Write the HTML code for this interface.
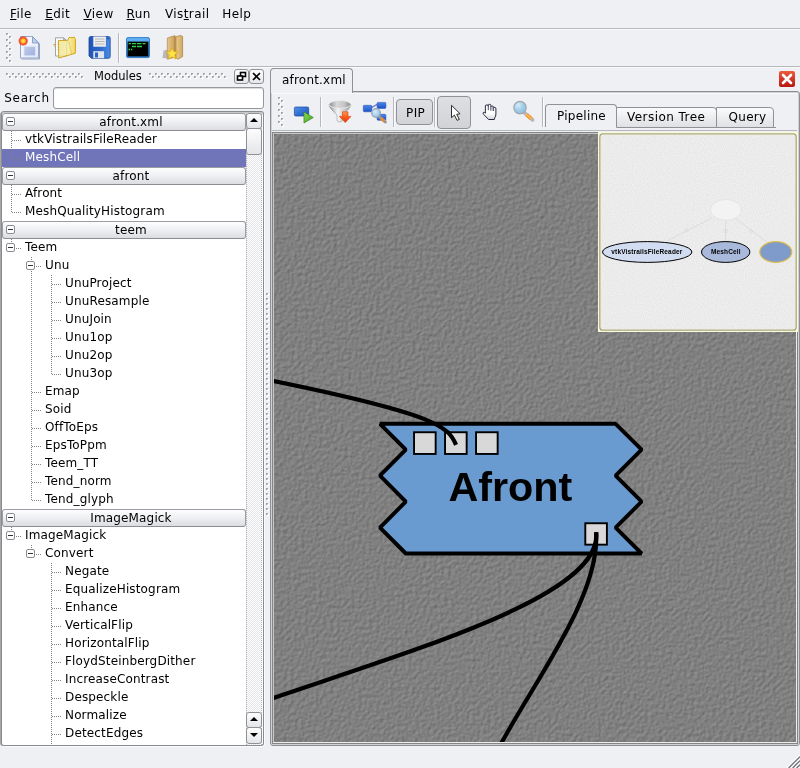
<!DOCTYPE html>
<html>
<head>
<meta charset="utf-8">
<title>VisTrails Builder</title>
<style>
html,body{margin:0;padding:0;}
body{width:800px;height:768px;overflow:hidden;background:#eff0f4;position:relative;
  font-family:"DejaVu Sans","Liberation Sans",sans-serif;font-size:12px;letter-spacing:0.15px;color:#000;}
.abs{position:absolute;}
.t{position:absolute;white-space:nowrap;line-height:16px;height:16px;}
u{text-decoration:underline;text-underline-offset:1px;text-decoration-thickness:1px;}
.ln{left:0;width:800px;height:1px;background:#b6b8be;}
.ln2{left:0;width:800px;height:1px;background:#f9fafc;}
.vsep{position:absolute;width:1px;background:#b6b8be;box-shadow:1px 0 0 #fafbfd;}
.dockbtn{width:13px;height:13px;border:1px solid #8f9196;border-radius:3px;background:linear-gradient(#fdfdfd,#e6e7ea);}
.dockbtn svg{display:block;}
#search{left:53px;top:87px;width:209px;height:20px;border:1px solid #96989e;border-radius:3px;background:#fff;box-shadow:inset 0 1px 1px #d8d9dd;}
/* tree */
#tree{left:1px;top:112px;width:261px;height:632px;background:#fff;border:1px solid #8a8b90;border-top-color:#c6c7cb;border-radius:3px;overflow:hidden;box-shadow:0 -1px 0 0 #8a8b90,1px 1px 0 0 #fbfbfd,-1px 0 0 0 #a6a7ab;}
.row{position:absolute;left:0;width:244px;height:18px;}
.row .t{top:0px;}
.hdr{position:absolute;left:0px;width:244px;height:18px;border:1px solid #9c9da2;border-bottom-color:#8c8d92;border-radius:3px;box-sizing:border-box;
  background:linear-gradient(#fdfdfe,#f0f1f4 45%,#dcdde1);text-align:center;line-height:16px;padding-left:14px;}
.hdr .box{left:3px;top:3px;}
.box{position:absolute;width:9px;height:9px;box-sizing:border-box;border:1px solid #8a8c92;border-radius:2px;background:#fff;}
.box:after{content:"";position:absolute;left:1px;top:3px;width:5px;height:1px;background:#333;}
.sel{background:#7074b8;color:#fff;}
.vl{position:absolute;width:1px;background-image:linear-gradient(to bottom,#828282 1px,transparent 1px);background-size:1px 2px;}
.hl{position:absolute;height:1px;background-image:linear-gradient(to right,#828282 1px,transparent 1px);background-size:2px 1px;}
#sbtrack{left:244px;top:0;width:16px;height:632px;background-color:#fff;
  background-image:linear-gradient(45deg,#e4e5e8 25%,transparent 25%,transparent 75%,#e4e5e8 75%),linear-gradient(45deg,#e4e5e8 25%,transparent 25%,transparent 75%,#e4e5e8 75%);
  background-size:2px 2px;background-position:0 0,1px 1px;}
.sbbtn{width:16px;height:16px;box-sizing:border-box;border:1px solid #8f9196;border-radius:3px;background:linear-gradient(#fdfdfd,#e4e5e9);}
.sbbtn i{position:absolute;left:3px;width:0;height:0;border-left:4px solid transparent;border-right:4px solid transparent;}
.sbbtn i.up{top:4px;border-bottom:4px solid #000;}
.sbbtn i.dn{top:5px;border-top:4px solid #000;}
/* right side */
#pane{left:270px;top:91px;width:528px;height:653px;border:1px solid #8c8e93;border-radius:3px;box-shadow:inset 0 0 0 1px #d0d1d5;}
#maintab{left:270px;top:68px;width:81px;height:24px;border:1px solid #8f9196;border-bottom:none;border-radius:4px 4px 0 0;background:#eff0f4;}
.tab{position:absolute;box-sizing:border-box;border:1px solid #8f9196;border-bottom:1px solid #8f9196;border-radius:0 4px 0 0;background:linear-gradient(#fbfbfc,#dfe0e4);text-align:center;}
.tab.act{background:#eff0f4;border-bottom:none;border-radius:4px 4px 0 0;}
.tbtn{position:absolute;box-sizing:border-box;border:1px solid #8f9196;border-radius:4px;background:linear-gradient(#dedfe2,#d2d3d7);}

#sbtrack{border-left:1px dotted #b4b5b9;border-right:1px dotted #b4b5b9;box-sizing:border-box;}
#app{position:absolute;left:0;top:0;width:800px;height:768px;opacity:0.999;}

</style>
</head>
<body>
<div id="app">
<!-- MENUBAR -->
<div class="t" style="left:10px;top:6px;letter-spacing:0.4px"><u>F</u>ile</div>
<div class="t" style="left:45.3px;top:6px;letter-spacing:0.4px"><u>E</u>dit</div>
<div class="t" style="left:83.5px;top:6px;letter-spacing:0.4px"><u>V</u>iew</div>
<div class="t" style="left:126.6px;top:6px;letter-spacing:0.4px"><u>R</u>un</div>
<div class="t" style="left:165px;top:6px;letter-spacing:0.4px">Vis<u>t</u>rail</div>
<div class="t" style="left:222.3px;top:6px;letter-spacing:0.4px">Help</div>
<div class="abs ln" style="top:28px"></div><div class="abs ln2" style="top:29px"></div>
<div class="abs ln" style="top:66px"></div><div class="abs ln2" style="top:67px"></div>

<svg class="abs" style="left:0;top:0" width="300" height="530" viewBox="0 0 300 530" shape-rendering="crispEdges"><path d="M6 73h2v1h-1v1h-1zM12 73h2v1h-1v1h-1zM18 73h2v1h-1v1h-1zM24 73h2v1h-1v1h-1zM30 73h2v1h-1v1h-1zM36 73h2v1h-1v1h-1zM42 73h2v1h-1v1h-1zM48 73h2v1h-1v1h-1zM54 73h2v1h-1v1h-1zM60 73h2v1h-1v1h-1zM66 73h2v1h-1v1h-1zM72 73h2v1h-1v1h-1zM78 73h2v1h-1v1h-1zM9 76h2v1h-1v1h-1zM15 76h2v1h-1v1h-1zM21 76h2v1h-1v1h-1zM27 76h2v1h-1v1h-1zM33 76h2v1h-1v1h-1zM39 76h2v1h-1v1h-1zM45 76h2v1h-1v1h-1zM51 76h2v1h-1v1h-1zM57 76h2v1h-1v1h-1zM63 76h2v1h-1v1h-1zM69 76h2v1h-1v1h-1zM75 76h2v1h-1v1h-1zM81 76h2v1h-1v1h-1zM149 73h2v1h-1v1h-1zM155 73h2v1h-1v1h-1zM161 73h2v1h-1v1h-1zM167 73h2v1h-1v1h-1zM173 73h2v1h-1v1h-1zM179 73h2v1h-1v1h-1zM185 73h2v1h-1v1h-1zM191 73h2v1h-1v1h-1zM197 73h2v1h-1v1h-1zM203 73h2v1h-1v1h-1zM209 73h2v1h-1v1h-1zM215 73h2v1h-1v1h-1zM221 73h2v1h-1v1h-1zM152 76h2v1h-1v1h-1zM158 76h2v1h-1v1h-1zM164 76h2v1h-1v1h-1zM170 76h2v1h-1v1h-1zM176 76h2v1h-1v1h-1zM182 76h2v1h-1v1h-1zM188 76h2v1h-1v1h-1zM194 76h2v1h-1v1h-1zM200 76h2v1h-1v1h-1zM206 76h2v1h-1v1h-1zM212 76h2v1h-1v1h-1zM218 76h2v1h-1v1h-1zM224 76h2v1h-1v1h-1zM6 33h2v1h-1v1h-1zM6 39h2v1h-1v1h-1zM6 45h2v1h-1v1h-1zM6 51h2v1h-1v1h-1zM6 57h2v1h-1v1h-1zM9 36h2v1h-1v1h-1zM9 42h2v1h-1v1h-1zM9 48h2v1h-1v1h-1zM9 54h2v1h-1v1h-1zM9 60h2v1h-1v1h-1zM278 97h2v1h-1v1h-1zM278 103h2v1h-1v1h-1zM278 109h2v1h-1v1h-1zM278 115h2v1h-1v1h-1zM278 121h2v1h-1v1h-1zM281 100h2v1h-1v1h-1zM281 106h2v1h-1v1h-1zM281 112h2v1h-1v1h-1zM281 118h2v1h-1v1h-1zM281 124h2v1h-1v1h-1zM266 293h2v1h-1v1h-1zM266 298h2v1h-1v1h-1zM266 303h2v1h-1v1h-1zM266 308h2v1h-1v1h-1zM266 313h2v1h-1v1h-1zM266 318h2v1h-1v1h-1zM266 323h2v1h-1v1h-1zM266 328h2v1h-1v1h-1zM266 333h2v1h-1v1h-1zM266 338h2v1h-1v1h-1zM266 343h2v1h-1v1h-1zM266 348h2v1h-1v1h-1zM266 353h2v1h-1v1h-1zM266 358h2v1h-1v1h-1zM266 363h2v1h-1v1h-1zM266 368h2v1h-1v1h-1zM266 373h2v1h-1v1h-1zM266 378h2v1h-1v1h-1zM266 383h2v1h-1v1h-1zM266 388h2v1h-1v1h-1zM266 393h2v1h-1v1h-1zM266 398h2v1h-1v1h-1zM266 403h2v1h-1v1h-1zM266 408h2v1h-1v1h-1zM266 413h2v1h-1v1h-1zM266 418h2v1h-1v1h-1zM266 423h2v1h-1v1h-1zM266 428h2v1h-1v1h-1zM266 433h2v1h-1v1h-1zM266 438h2v1h-1v1h-1zM266 443h2v1h-1v1h-1zM266 448h2v1h-1v1h-1zM266 453h2v1h-1v1h-1zM266 458h2v1h-1v1h-1zM266 463h2v1h-1v1h-1zM266 468h2v1h-1v1h-1zM266 473h2v1h-1v1h-1zM266 478h2v1h-1v1h-1zM266 483h2v1h-1v1h-1zM266 488h2v1h-1v1h-1zM266 493h2v1h-1v1h-1zM266 498h2v1h-1v1h-1zM266 503h2v1h-1v1h-1zM266 508h2v1h-1v1h-1zM266 513h2v1h-1v1h-1z" fill="#a2a3a8"/><path d="M7 74h1v1h-1zM13 74h1v1h-1zM19 74h1v1h-1zM25 74h1v1h-1zM31 74h1v1h-1zM37 74h1v1h-1zM43 74h1v1h-1zM49 74h1v1h-1zM55 74h1v1h-1zM61 74h1v1h-1zM67 74h1v1h-1zM73 74h1v1h-1zM79 74h1v1h-1zM10 77h1v1h-1zM16 77h1v1h-1zM22 77h1v1h-1zM28 77h1v1h-1zM34 77h1v1h-1zM40 77h1v1h-1zM46 77h1v1h-1zM52 77h1v1h-1zM58 77h1v1h-1zM64 77h1v1h-1zM70 77h1v1h-1zM76 77h1v1h-1zM82 77h1v1h-1zM150 74h1v1h-1zM156 74h1v1h-1zM162 74h1v1h-1zM168 74h1v1h-1zM174 74h1v1h-1zM180 74h1v1h-1zM186 74h1v1h-1zM192 74h1v1h-1zM198 74h1v1h-1zM204 74h1v1h-1zM210 74h1v1h-1zM216 74h1v1h-1zM222 74h1v1h-1zM153 77h1v1h-1zM159 77h1v1h-1zM165 77h1v1h-1zM171 77h1v1h-1zM177 77h1v1h-1zM183 77h1v1h-1zM189 77h1v1h-1zM195 77h1v1h-1zM201 77h1v1h-1zM207 77h1v1h-1zM213 77h1v1h-1zM219 77h1v1h-1zM225 77h1v1h-1zM7 34h1v1h-1zM7 40h1v1h-1zM7 46h1v1h-1zM7 52h1v1h-1zM7 58h1v1h-1zM10 37h1v1h-1zM10 43h1v1h-1zM10 49h1v1h-1zM10 55h1v1h-1zM10 61h1v1h-1zM279 98h1v1h-1zM279 104h1v1h-1zM279 110h1v1h-1zM279 116h1v1h-1zM279 122h1v1h-1zM282 101h1v1h-1zM282 107h1v1h-1zM282 113h1v1h-1zM282 119h1v1h-1zM282 125h1v1h-1zM267 294h1v1h-1zM267 299h1v1h-1zM267 304h1v1h-1zM267 309h1v1h-1zM267 314h1v1h-1zM267 319h1v1h-1zM267 324h1v1h-1zM267 329h1v1h-1zM267 334h1v1h-1zM267 339h1v1h-1zM267 344h1v1h-1zM267 349h1v1h-1zM267 354h1v1h-1zM267 359h1v1h-1zM267 364h1v1h-1zM267 369h1v1h-1zM267 374h1v1h-1zM267 379h1v1h-1zM267 384h1v1h-1zM267 389h1v1h-1zM267 394h1v1h-1zM267 399h1v1h-1zM267 404h1v1h-1zM267 409h1v1h-1zM267 414h1v1h-1zM267 419h1v1h-1zM267 424h1v1h-1zM267 429h1v1h-1zM267 434h1v1h-1zM267 439h1v1h-1zM267 444h1v1h-1zM267 449h1v1h-1zM267 454h1v1h-1zM267 459h1v1h-1zM267 464h1v1h-1zM267 469h1v1h-1zM267 474h1v1h-1zM267 479h1v1h-1zM267 484h1v1h-1zM267 489h1v1h-1zM267 494h1v1h-1zM267 499h1v1h-1zM267 504h1v1h-1zM267 509h1v1h-1zM267 514h1v1h-1z" fill="#d0d1d6"/><path d="M8 74h1v2h-2v-1h1zM14 74h1v2h-2v-1h1zM20 74h1v2h-2v-1h1zM26 74h1v2h-2v-1h1zM32 74h1v2h-2v-1h1zM38 74h1v2h-2v-1h1zM44 74h1v2h-2v-1h1zM50 74h1v2h-2v-1h1zM56 74h1v2h-2v-1h1zM62 74h1v2h-2v-1h1zM68 74h1v2h-2v-1h1zM74 74h1v2h-2v-1h1zM80 74h1v2h-2v-1h1zM11 77h1v2h-2v-1h1zM17 77h1v2h-2v-1h1zM23 77h1v2h-2v-1h1zM29 77h1v2h-2v-1h1zM35 77h1v2h-2v-1h1zM41 77h1v2h-2v-1h1zM47 77h1v2h-2v-1h1zM53 77h1v2h-2v-1h1zM59 77h1v2h-2v-1h1zM65 77h1v2h-2v-1h1zM71 77h1v2h-2v-1h1zM77 77h1v2h-2v-1h1zM83 77h1v2h-2v-1h1zM151 74h1v2h-2v-1h1zM157 74h1v2h-2v-1h1zM163 74h1v2h-2v-1h1zM169 74h1v2h-2v-1h1zM175 74h1v2h-2v-1h1zM181 74h1v2h-2v-1h1zM187 74h1v2h-2v-1h1zM193 74h1v2h-2v-1h1zM199 74h1v2h-2v-1h1zM205 74h1v2h-2v-1h1zM211 74h1v2h-2v-1h1zM217 74h1v2h-2v-1h1zM223 74h1v2h-2v-1h1zM154 77h1v2h-2v-1h1zM160 77h1v2h-2v-1h1zM166 77h1v2h-2v-1h1zM172 77h1v2h-2v-1h1zM178 77h1v2h-2v-1h1zM184 77h1v2h-2v-1h1zM190 77h1v2h-2v-1h1zM196 77h1v2h-2v-1h1zM202 77h1v2h-2v-1h1zM208 77h1v2h-2v-1h1zM214 77h1v2h-2v-1h1zM220 77h1v2h-2v-1h1zM226 77h1v2h-2v-1h1zM8 34h1v2h-2v-1h1zM8 40h1v2h-2v-1h1zM8 46h1v2h-2v-1h1zM8 52h1v2h-2v-1h1zM8 58h1v2h-2v-1h1zM11 37h1v2h-2v-1h1zM11 43h1v2h-2v-1h1zM11 49h1v2h-2v-1h1zM11 55h1v2h-2v-1h1zM11 61h1v2h-2v-1h1zM280 98h1v2h-2v-1h1zM280 104h1v2h-2v-1h1zM280 110h1v2h-2v-1h1zM280 116h1v2h-2v-1h1zM280 122h1v2h-2v-1h1zM283 101h1v2h-2v-1h1zM283 107h1v2h-2v-1h1zM283 113h1v2h-2v-1h1zM283 119h1v2h-2v-1h1zM283 125h1v2h-2v-1h1zM268 294h1v2h-2v-1h1zM268 299h1v2h-2v-1h1zM268 304h1v2h-2v-1h1zM268 309h1v2h-2v-1h1zM268 314h1v2h-2v-1h1zM268 319h1v2h-2v-1h1zM268 324h1v2h-2v-1h1zM268 329h1v2h-2v-1h1zM268 334h1v2h-2v-1h1zM268 339h1v2h-2v-1h1zM268 344h1v2h-2v-1h1zM268 349h1v2h-2v-1h1zM268 354h1v2h-2v-1h1zM268 359h1v2h-2v-1h1zM268 364h1v2h-2v-1h1zM268 369h1v2h-2v-1h1zM268 374h1v2h-2v-1h1zM268 379h1v2h-2v-1h1zM268 384h1v2h-2v-1h1zM268 389h1v2h-2v-1h1zM268 394h1v2h-2v-1h1zM268 399h1v2h-2v-1h1zM268 404h1v2h-2v-1h1zM268 409h1v2h-2v-1h1zM268 414h1v2h-2v-1h1zM268 419h1v2h-2v-1h1zM268 424h1v2h-2v-1h1zM268 429h1v2h-2v-1h1zM268 434h1v2h-2v-1h1zM268 439h1v2h-2v-1h1zM268 444h1v2h-2v-1h1zM268 449h1v2h-2v-1h1zM268 454h1v2h-2v-1h1zM268 459h1v2h-2v-1h1zM268 464h1v2h-2v-1h1zM268 469h1v2h-2v-1h1zM268 474h1v2h-2v-1h1zM268 479h1v2h-2v-1h1zM268 484h1v2h-2v-1h1zM268 489h1v2h-2v-1h1zM268 494h1v2h-2v-1h1zM268 499h1v2h-2v-1h1zM268 504h1v2h-2v-1h1zM268 509h1v2h-2v-1h1zM268 514h1v2h-2v-1h1z" fill="#ffffff"/></svg>
<!-- MAIN TOOLBAR -->
<div class="vsep" style="left:118px;top:33px;height:30px"></div>
<svg class="abs" style="left:0;top:30px" width="200" height="36" viewBox="0 30 200 36">
 <defs>
  <linearGradient id="pg" x1="0" y1="0" x2="1" y2="1"><stop offset="0" stop-color="#ffffff"/><stop offset="1" stop-color="#dfe7f8"/></linearGradient>
  <linearGradient id="sq" x1="0" y1="0" x2="1" y2="1"><stop offset="0" stop-color="#c2cdec"/><stop offset="1" stop-color="#9fb0dc"/></linearGradient>
  <radialGradient id="sun"><stop offset="0" stop-color="#fff25a"/><stop offset=".4" stop-color="#ffc020"/><stop offset=".7" stop-color="#f4502c"/><stop offset="1" stop-color="#e83a2a" stop-opacity=".75"/></radialGradient>
  <linearGradient id="fy" x1="0" y1="0" x2="1" y2="0"><stop offset="0" stop-color="#f1e79c"/><stop offset=".6" stop-color="#f8ec9a"/><stop offset="1" stop-color="#f2cf42"/></linearGradient>
  <linearGradient id="sv" x1="0" y1="0" x2="1" y2="0"><stop offset="0" stop-color="#1f55b4"/><stop offset=".6" stop-color="#2f6cd0"/><stop offset="1" stop-color="#4a8ee6"/></linearGradient>
  <linearGradient id="bk1" x1="0" y1="0" x2="1" y2="0"><stop offset="0" stop-color="#e6c88c"/><stop offset="1" stop-color="#c99e58"/></linearGradient>
  <linearGradient id="bk2" x1="0" y1="0" x2="1" y2="0"><stop offset="0" stop-color="#b98c48"/><stop offset=".3" stop-color="#e4c484"/><stop offset="1" stop-color="#d2a860"/></linearGradient>
  <linearGradient id="cb" x1="0" y1="0" x2="0" y2="1"><stop offset="0" stop-color="#62b4f6"/><stop offset="1" stop-color="#2f86da"/></linearGradient>
 </defs>
 <!-- new document -->
 <path d="M21.500 59 H39.500 V44 L33.500 37.500" fill="none" stroke="#56678c" stroke-width="1" opacity=".55"/>
 <path d="M20.500 36.500 H32.500 L38.500 43 V58 H20.500 Z" fill="url(#pg)" stroke="#93a7d0" stroke-width="1"/>
 <path d="M32.500 36.500 V43 H38.500 Z" fill="#b9d2ee" stroke="#7f94c0" stroke-width=".8"/>
 <rect x="24" y="46.300" width="11.400" height="9.500" fill="url(#sq)" stroke="#dfe6f6" stroke-width=".8"/>
 <circle cx="23.200" cy="41" r="4.700" fill="url(#sun)"/>
 <!-- open folder -->
 <path d="M55.500 37.800 H63.500 L66.500 40.800 V56 H55.500 Z" fill="#fbfbfb" stroke="#9a9a9a" stroke-width=".9"/>
 <path d="M63.500 37.800 V40.800 H66.500 Z" fill="#a9c4e4" stroke="#8a9ab0" stroke-width=".6"/>
 <path d="M57 42 H64 M57 44.500 H64 M57 47 H64 M57 49.500 H64" stroke="#d8d8d8" stroke-width=".8"/>
 <path d="M53.200 44.500 h1.800 v2.400" fill="none" stroke="#d4a820" stroke-width=".9"/>
 <path d="M58.500 40.500 L67.800 40.300 L69 37.600 L74.500 37.300 L75.500 39.500 L75.300 53.300 L58.700 58 Z" fill="url(#fy)" fill-opacity=".82" stroke="#d2a41c" stroke-width="1" stroke-linejoin="round"/>
 <path d="M68.500 40.600 L71.800 54" stroke="#e2bc3c" stroke-width=".8" opacity=".8"/>
 <!-- save -->
 <path d="M89 38.200 Q89 36.500 90.800 36.500 H108.500 Q110.200 36.500 110.200 38.200 V56.600 Q110.200 58.300 108.500 58.300 H91.500 L89 56 Z" fill="url(#sv)" stroke="#1a469c" stroke-width=".8"/>
 <rect x="93.300" y="36.500" width="12.600" height="10.200" fill="#eeeeee"/>
 <path d="M95 39 H104.500 M95 41.500 H104.500 M95 44 H104.500" stroke="#b4b4b4" stroke-width="1"/>
 <rect x="93.300" y="51.200" width="10.800" height="7" fill="#dfe3ec"/>
 <rect x="95" y="52.500" width="3" height="5" fill="#2a62c4"/>
 <rect x="107.300" y="37.600" width="1.500" height="1.500" fill="#183f8c"/>
 <!-- console -->
 <rect x="126.500" y="37.600" width="23" height="20" rx="1.500" fill="url(#cb)" stroke="#2a74c4" stroke-width=".9"/>
 <rect x="127.600" y="41.600" width="20.800" height="14.800" fill="#000"/>
 <path d="M128.500 43.600 H131 M132 43.600 H136 M137 43.600 H141.500 M142.500 43.600 H145.500 M132 46.500 H136 M137 46.500 H142 M128.500 49.500 H130 M130.800 49.500 H132.300" stroke="#2fd048" stroke-width="1.300"/>
 <!-- bookmarks -->
 <path d="M162.500 58 L163.500 50.500 L168 49.500 L168.500 58.500 Z" fill="#8a8c92" opacity=".55"/>
 <path d="M167.300 38 L175 35.600 V57.200 L167.300 59.200 Z" fill="url(#bk1)" stroke="#b08848" stroke-width=".7"/>
 <path d="M175 37 L180.500 35.400 L182.600 36.400 V56.600 L178 59.300 L175 57.200 Z" fill="url(#bk2)" stroke="#a67e40" stroke-width=".7"/>
 <path d="M172.100 47.600 L173.800 51.600 L178.100 52 L174.800 54.800 L175.800 59 L172.100 56.800 L168.400 59 L169.400 54.800 L166.100 52 L170.400 51.600 Z" fill="#ffe548" stroke="#d8a41c" stroke-width=".8" stroke-linejoin="round"/>
</svg>


<!-- MODULE PALETTE DOCK -->
<div class="t" style="left:94px;top:68px;font-size:11.5px;letter-spacing:0">Modules</div>
<div class="abs dockbtn" style="left:234px;top:69px"><svg width="13" height="13" viewBox="0 0 13 13"><rect x="5.5" y="2.5" width="5" height="4" fill="#fff" stroke="#000" stroke-width="1.6"/><rect x="2.5" y="6" width="5" height="4" fill="#fff" stroke="#000" stroke-width="1.6"/></svg></div>
<div class="abs dockbtn" style="left:249px;top:69px"><svg width="13" height="13" viewBox="0 0 13 13"><path d="M3 3 L10 10 M10 3 L3 10" stroke="#000" stroke-width="1.6" fill="none"/></svg></div>
<div class="t" style="left:4.300px;top:90px;letter-spacing:0.7px">Search</div>
<div class="abs" id="search"></div>

<div class="abs" id="tree">
<div class="hdr" style="top:0px"><span class="box"></span>afront.xml</div>
<div class="row" style="top:18px"><span class="t" style="left:23px">vtkVistrailsFileReader</span></div>
<span class="hl" style="left:10px;top:27px;width:9px"></span>
<div class="row sel" style="top:36px"><span class="t" style="left:23px">MeshCell</span></div>
<span class="hl" style="left:10px;top:45px;width:9px"></span>
<div class="hdr" style="top:54px"><span class="box"></span>afront</div>
<div class="row" style="top:72px"><span class="t" style="left:23px">Afront</span></div>
<span class="hl" style="left:10px;top:81px;width:9px"></span>
<div class="row" style="top:90px"><span class="t" style="left:23px">MeshQualityHistogram</span></div>
<span class="hl" style="left:10px;top:99px;width:9px"></span>
<div class="hdr" style="top:108px"><span class="box"></span>teem</div>
<div class="row" style="top:126px"><span class="t" style="left:23px">Teem</span></div>
<span class="box" style="left:4px;top:130px"></span>
<span class="hl" style="left:14px;top:135px;width:5px"></span>
<div class="row" style="top:144px"><span class="t" style="left:43px">Unu</span></div>
<span class="box" style="left:24px;top:148px"></span>
<span class="hl" style="left:34px;top:153px;width:5px"></span>
<div class="row" style="top:162px"><span class="t" style="left:63px">UnuProject</span></div>
<span class="hl" style="left:50px;top:171px;width:9px"></span>
<div class="row" style="top:180px"><span class="t" style="left:63px">UnuResample</span></div>
<span class="hl" style="left:50px;top:189px;width:9px"></span>
<div class="row" style="top:198px"><span class="t" style="left:63px">UnuJoin</span></div>
<span class="hl" style="left:50px;top:207px;width:9px"></span>
<div class="row" style="top:216px"><span class="t" style="left:63px">Unu1op</span></div>
<span class="hl" style="left:50px;top:225px;width:9px"></span>
<div class="row" style="top:234px"><span class="t" style="left:63px">Unu2op</span></div>
<span class="hl" style="left:50px;top:243px;width:9px"></span>
<div class="row" style="top:252px"><span class="t" style="left:63px">Unu3op</span></div>
<span class="hl" style="left:50px;top:261px;width:9px"></span>
<div class="row" style="top:270px"><span class="t" style="left:43px">Emap</span></div>
<span class="hl" style="left:30px;top:279px;width:9px"></span>
<div class="row" style="top:288px"><span class="t" style="left:43px">Soid</span></div>
<span class="hl" style="left:30px;top:297px;width:9px"></span>
<div class="row" style="top:306px"><span class="t" style="left:43px">OffToEps</span></div>
<span class="hl" style="left:30px;top:315px;width:9px"></span>
<div class="row" style="top:324px"><span class="t" style="left:43px">EpsToPpm</span></div>
<span class="hl" style="left:30px;top:333px;width:9px"></span>
<div class="row" style="top:342px"><span class="t" style="left:43px">Teem_TT</span></div>
<span class="hl" style="left:30px;top:351px;width:9px"></span>
<div class="row" style="top:360px"><span class="t" style="left:43px">Tend_norm</span></div>
<span class="hl" style="left:30px;top:369px;width:9px"></span>
<div class="row" style="top:378px"><span class="t" style="left:43px">Tend_glyph</span></div>
<span class="hl" style="left:30px;top:387px;width:9px"></span>
<div class="hdr" style="top:396px"><span class="box"></span>ImageMagick</div>
<div class="row" style="top:414px"><span class="t" style="left:23px">ImageMagick</span></div>
<span class="box" style="left:4px;top:418px"></span>
<span class="hl" style="left:14px;top:423px;width:5px"></span>
<div class="row" style="top:432px"><span class="t" style="left:43px">Convert</span></div>
<span class="box" style="left:24px;top:436px"></span>
<span class="hl" style="left:34px;top:441px;width:5px"></span>
<div class="row" style="top:450px"><span class="t" style="left:63px">Negate</span></div>
<span class="hl" style="left:50px;top:459px;width:9px"></span>
<div class="row" style="top:468px"><span class="t" style="left:63px">EqualizeHistogram</span></div>
<span class="hl" style="left:50px;top:477px;width:9px"></span>
<div class="row" style="top:486px"><span class="t" style="left:63px">Enhance</span></div>
<span class="hl" style="left:50px;top:495px;width:9px"></span>
<div class="row" style="top:504px"><span class="t" style="left:63px">VerticalFlip</span></div>
<span class="hl" style="left:50px;top:513px;width:9px"></span>
<div class="row" style="top:522px"><span class="t" style="left:63px">HorizontalFlip</span></div>
<span class="hl" style="left:50px;top:531px;width:9px"></span>
<div class="row" style="top:540px"><span class="t" style="left:63px">FloydSteinbergDither</span></div>
<span class="hl" style="left:50px;top:549px;width:9px"></span>
<div class="row" style="top:558px"><span class="t" style="left:63px">IncreaseContrast</span></div>
<span class="hl" style="left:50px;top:567px;width:9px"></span>
<div class="row" style="top:576px"><span class="t" style="left:63px">Despeckle</span></div>
<span class="hl" style="left:50px;top:585px;width:9px"></span>
<div class="row" style="top:594px"><span class="t" style="left:63px">Normalize</span></div>
<span class="hl" style="left:50px;top:603px;width:9px"></span>
<div class="row" style="top:612px"><span class="t" style="left:63px">DetectEdges</span></div>
<span class="hl" style="left:50px;top:621px;width:9px"></span>
<span class="vl" style="left:9px;top:18px;height:28px"></span>
<span class="vl" style="left:9px;top:72px;height:28px"></span>
<span class="vl" style="left:9px;top:126px;height:4px"></span>
<span class="vl" style="left:29px;top:144px;height:4px"></span>
<span class="vl" style="left:29px;top:157px;height:231px;background-position:0 1px"></span>
<span class="vl" style="left:49px;top:162px;height:100px"></span>
<span class="vl" style="left:9px;top:414px;height:4px"></span>
<span class="vl" style="left:29px;top:432px;height:4px"></span>
<span class="vl" style="left:49px;top:450px;height:182px"></span>
<div class="abs" id="sbtrack"></div>
<div class="abs sbbtn" style="left:244px;top:0px"><i class="up"></i></div>
<div class="abs sbbtn" style="left:244px;top:15px;height:27px"></div>
<div class="abs sbbtn" style="left:244px;top:599px"><i class="up"></i></div>
<div class="abs sbbtn" style="left:244px;top:614px;height:17px"><i class="dn"></i></div>
</div>

<!-- WORKSPACE -->
<div class="abs" id="pane"></div>
<div class="abs" id="maintab"></div>
<div class="t" style="left:282px;top:71.500px;letter-spacing:0.2px">afront.xml</div>
<!-- close button -->
<svg class="abs" style="left:779px;top:71px" width="16" height="16" viewBox="0 0 16 16">
 <defs><linearGradient id="cg" x1="0" y1="0" x2="0" y2="1"><stop offset="0" stop-color="#ee5a3c"/><stop offset="1" stop-color="#b8170e"/></linearGradient></defs>
 <rect x="0" y="0" width="16" height="16" rx="2" fill="url(#cg)"/>
 <path d="M4 4 L12 12 M12 4 L4 12" stroke="#fff" stroke-width="2.6" stroke-linecap="round"/>
</svg>
<!-- inner toolbar -->
<div class="abs ln2" style="left:272px;width:525px;top:93px"></div>
<div class="abs ln" style="left:272px;width:525px;top:130px"></div>
<div class="vsep" style="left:320px;top:97px;height:30px"></div>
<div class="vsep" style="left:393px;top:97px;height:30px"></div>
<div class="vsep" style="left:434px;top:97px;height:30px"></div>
<div class="vsep" style="left:542px;top:97px;height:30px"></div>
<!-- execute icon -->
<svg class="abs" style="left:292px;top:105px" width="24" height="20" viewBox="0 0 24 20">
 <defs><linearGradient id="bg1" x1="0" y1="0" x2="1" y2="1"><stop offset="0" stop-color="#4f94ea"/><stop offset="1" stop-color="#1a4fb8"/></linearGradient>
 <linearGradient id="gg1" x1="0" y1="0" x2="1" y2="1"><stop offset="0" stop-color="#8fdc5a"/><stop offset="1" stop-color="#3f9e22"/></linearGradient></defs>
 <rect x="2.400" y="2" width="14.300" height="9" rx="1.300" fill="url(#bg1)" stroke="#1a46a4" stroke-width=".7"/>
 <path d="M12 7 L21.300 12.500 L12 18 Z" fill="url(#gg1)" stroke="#3c8e22" stroke-width=".8" stroke-linejoin="round"/>
</svg>
<!-- funnel icon -->
<svg class="abs" style="left:327px;top:99px" width="26" height="26" viewBox="327 99 26 26">
 <defs><linearGradient id="fg1" x1="0" y1="0" x2="1" y2="0"><stop offset="0" stop-color="#8e8e8e"/><stop offset=".4" stop-color="#f6f6f6"/><stop offset="1" stop-color="#9c9c9c"/></linearGradient>
 <linearGradient id="fg2" x1="0" y1="0" x2="1" y2="0"><stop offset="0" stop-color="#8c8c8c"/><stop offset=".35" stop-color="#d8d8d8"/><stop offset=".7" stop-color="#c4c4c4"/><stop offset="1" stop-color="#8a8a8a"/></linearGradient>
 <linearGradient id="og1" x1="0" y1="0" x2="0" y2="1"><stop offset="0" stop-color="#ff9a4a"/><stop offset=".5" stop-color="#fb5a1c"/><stop offset="1" stop-color="#e23a0c"/></linearGradient></defs>
 <path d="M328.900 104.400 Q329.500 108.500 336.900 114.800 L337.200 121 Q339.700 123.200 342.300 121 L342.600 114.800 Q350.300 108.500 351 104.400 Z" fill="url(#fg1)" stroke="#8a8a8a" stroke-width=".5"/>
 <ellipse cx="339.950" cy="104.400" rx="10.900" ry="3.900" fill="url(#fg2)" stroke="#ececec" stroke-width=".9"/>
 <path d="M342.500 111.800 H348 V116.400 H351 L345.250 122.500 L339.500 116.400 H342.500 Z" fill="url(#og1)" stroke="#d23c0c" stroke-width=".6" stroke-linejoin="round"/>
</svg>
<!-- visual query icon -->
<svg class="abs" style="left:361px;top:100px" width="28" height="24" viewBox="361 100 28 24">
 <defs><linearGradient id="qb" x1="0" y1="0" x2="0" y2="1"><stop offset="0" stop-color="#4a86ea"/><stop offset="1" stop-color="#1c54c8"/></linearGradient>
 <radialGradient id="ql" cx=".4" cy=".35" r=".7"><stop offset="0" stop-color="#d4ecfa"/><stop offset="1" stop-color="#8cbfe6"/></radialGradient></defs>
 <path d="M371 107.800 L378 103.800" stroke="#7f80d0" stroke-width="1.500"/>
 <rect x="363.300" y="105.300" width="8.500" height="6.500" rx="1" fill="url(#qb)" stroke="#1a48a8" stroke-width=".5"/>
 <rect x="377.100" y="102.400" width="8.800" height="6" rx="1" fill="url(#qb)" stroke="#1a48a8" stroke-width=".5"/>
 <rect x="377.100" y="114.300" width="8.800" height="6" rx="1" fill="url(#qb)" stroke="#1a48a8" stroke-width=".5"/>
 <path d="M379.200 116.600 L385.200 121.900" stroke="#8e99a8" stroke-width="3.200" stroke-linecap="round"/>
 <path d="M380.800 118 L384.600 121.400" stroke="#f08a24" stroke-width="2.600" stroke-linecap="butt"/>
 <circle cx="376.050" cy="113" r="4.300" fill="url(#ql)" stroke="#98a4b4" stroke-width="1.200"/>
</svg>
<!-- PIP button -->
<div class="tbtn" style="left:396px;top:99px;width:37px;height:26px"></div>
<div class="t" style="left:406px;top:105px;letter-spacing:0.4px">PIP</div>
<!-- select button -->
<div class="tbtn" style="left:437px;top:96px;width:34px;height:33px"></div>
<svg class="abs" style="left:448px;top:102px" width="16" height="22" viewBox="448 102 16 22">
 <path d="M451.500 105.300 L451.500 117.700 L454.400 115.100 L457.100 120.400 L459.300 119.400 L456.700 114.300 L460.100 113.800 Z" fill="#fff" stroke="#2c2c2c" stroke-width="1" stroke-linejoin="round"/>
</svg>
<!-- hand -->
<svg class="abs" style="left:480px;top:102px" width="20" height="20" viewBox="480 102 20 20">
 <defs><linearGradient id="hg" x1="0" y1="0" x2="0" y2="1"><stop offset="0" stop-color="#fff"/><stop offset=".6" stop-color="#fff"/><stop offset="1" stop-color="#d4d4d8"/></linearGradient></defs>
 <path d="M485.400 111.800 V106 Q485.400 104.900 486.800 104.900 Q488.300 104.900 488.300 106 V105.200 Q488.400 104.300 489.600 104.300 Q490.800 104.300 490.800 105.400 V106.700 Q491 105.900 492.200 106 Q493.500 106.100 493.600 107.200 V108.200 Q493.900 107.200 494.900 107.300 Q495.900 107.500 495.900 108.800 V114 Q495.900 116.400 494.800 117.700 L494.300 119.500 H488.600 L483.500 114.200 Q482.600 112.900 483.400 112.400 Q484.300 111.900 485.400 113.200 Z" fill="url(#hg)" stroke="#1e1e38" stroke-width=".95" stroke-linejoin="round"/>
 <path d="M488.300 106 V110.200 M490.800 106.700 V110.600 M493.600 108.200 V111" stroke="#1e1e38" stroke-width=".8" fill="none"/>
 <rect x="491.300" y="107" width="1.800" height="3.800" fill="#b4b4c0"/>
</svg>
<!-- zoom -->
<svg class="abs" style="left:510px;top:98px" width="26" height="26" viewBox="510 98 26 26">
 <defs><radialGradient id="zl" cx=".35" cy=".3" r=".75"><stop offset="0" stop-color="#d6ecf8"/><stop offset=".5" stop-color="#a4d0ea"/><stop offset="1" stop-color="#8bbfe0"/></radialGradient>
 <linearGradient id="zh" x1="0" y1="1" x2="1" y2="0"><stop offset="0" stop-color="#e85a10"/><stop offset=".5" stop-color="#ffc24a"/><stop offset="1" stop-color="#e85a10"/></linearGradient></defs>
 <path d="M524.300 112.600 L532.600 119.900" stroke="#b4b8be" stroke-width="3.800" stroke-linecap="round"/>
 <path d="M526.400 114.400 L531.400 118.800" stroke="url(#zh)" stroke-width="3.700" stroke-linecap="butt"/>
 <circle cx="520" cy="107.600" r="6.200" fill="url(#zl)" stroke="#a2a6ac" stroke-width="1.200"/>
</svg>
<!-- view tabs -->
<div class="abs" style="left:617px;top:127px;width:159px;height:1px;background:#8f9196"></div>
<div class="tab" style="left:616px;top:107px;width:101px;height:21px"></div>
<div class="tab" style="left:716px;top:107px;width:58px;height:21px"></div>
<div class="tab act" style="left:545px;top:104px;width:72px;height:23px"></div>
<div class="t" style="left:557px;top:108px;letter-spacing:0.25px">Pipeline</div>
<div class="t" style="left:627px;top:109px;letter-spacing:0.45px">Version Tree</div>
<div class="t" style="left:728.500px;top:109px;letter-spacing:0.3px">Query</div>

<svg class="abs" style="left:272px;top:132px" width="526" height="612" viewBox="272 132 526 612" font-family="'Liberation Sans',sans-serif">
 <defs>
  <filter id="noise" x="0" y="0" width="100%" height="100%" color-interpolation-filters="sRGB">
   <feTurbulence type="fractalNoise" baseFrequency="0.28" numOctaves="2" seed="7" result="n"/>
   <feDiffuseLighting in="n" surfaceScale="0.6" diffuseConstant="1" lighting-color="#fff" result="l"><feDistantLight azimuth="225" elevation="45"/></feDiffuseLighting>
   <feColorMatrix in="l" type="matrix" values="0.42 0 0 0 0.205  0.42 0 0 0 0.205  0.42 0 0 0 0.205  0 0 0 0 1"/>
  </filter>
  <filter id="pnoise" x="0" y="0" width="100%" height="100%" color-interpolation-filters="sRGB">
   <feTurbulence type="fractalNoise" baseFrequency="0.9" numOctaves="1" seed="3" result="n"/>
   <feColorMatrix in="n" type="matrix" values="0.09 0 0 0 0.877  0.09 0 0 0 0.877  0.09 0 0 0 0.877  0 0 0 0 1"/>
  </filter>
 </defs>
 <rect x="272" y="132" width="526" height="612" fill="#858585"/>
 <rect x="273" y="133" width="524" height="610" fill="#c6c6c6"/>
 <path d="M273 742.500 H796.500 V133" fill="none" stroke="#ececec" stroke-width="1"/>
 <clipPath id="cv"><rect x="274" y="134" width="522" height="608"/></clipPath>
 <rect x="274" y="134" width="522" height="608" fill="#808080" filter="url(#noise)"/>
 <!-- module -->
 <path d="M380 423.800 H615.600 L641.600 449.700 L615.600 475.700 L641.600 501.600 L615.600 527.600 L641.600 553.500 H405.800 L380 527.600 L405.800 501.600 L380 475.700 L405.800 449.700 Z" fill="#6a9bd0" stroke="#000" stroke-width="3.900" stroke-linejoin="bevel"/>
 <g fill="#d8d8d8" stroke="#000" stroke-width="1.900">
  <rect x="414.050" y="432.250" width="21.600" height="21.700"/>
  <rect x="445.050" y="432.250" width="21.600" height="21.700"/>
  <rect x="476.050" y="432.250" width="21.600" height="21.700"/>
  <rect x="585.300" y="523.250" width="21.600" height="21.400"/>
 </g>
 <text x="510.400" y="500.600" font-size="41.300" font-weight="bold" text-anchor="middle" letter-spacing="0">Afront</text>
 <!-- connections -->
 <g fill="none" stroke="#000" stroke-width="4.200" stroke-linecap="butt" stroke-linejoin="round" clip-path="url(#cv)">
  <path d="M264 379 L273.750 381 C438.400 414.700 448.400 426.900 456.050 444.900"/>
  <path d="M596.100 532.200 C603.100 594.600 420.900 647.500 275 697.500 L264 701.100"/>
  <path d="M596.100 532.200 C600.200 593.900 538 676 502 742 L496 753"/>
 </g>
 <!-- PIP -->
 <rect x="598" y="132" width="200" height="200" fill="#fbfbd8"/>
 <rect x="601.200" y="135.200" width="193.600" height="193.600" rx="1.500" fill="#ebebeb"/>
 <rect x="601.200" y="135.200" width="193.600" height="193.600" fill="#ebebeb" filter="url(#pnoise)"/>
 <rect x="599.850" y="133.850" width="196.300" height="196.300" rx="3" fill="none" stroke="#a6a684" stroke-width="1.300"/>
 <g stroke="#dddddd" stroke-width="1" fill="none">
  <path d="M712.500 217.700 L667 240.900 M725.600 220.400 V241.200 M735.600 218.600 L766.800 241.900"/>
  <path d="M685 229.300 L686.700 232.600 M686.600 228.500 L688.300 231.800 M723.400 230 H727.800 M723.400 232 H727.800 M749.200 232.200 L751.600 229.400 M750.600 233.400 L753 230.600" stroke="#d6d6d6" stroke-width=".8"/>
 </g>
 <ellipse cx="725.900" cy="209.900" rx="15.500" ry="10.400" fill="#f3f3f3" stroke="#e4e4e4"/>
 <ellipse cx="647.200" cy="252" rx="44.700" ry="10.400" fill="#d3ddf1" stroke="#000" stroke-width="1"/>
 <ellipse cx="725.700" cy="252" rx="24.200" ry="10.400" fill="#a9b9dc" stroke="#000" stroke-width="1"/>
 <ellipse cx="775.800" cy="252" rx="16" ry="10.400" fill="#7f9bcb" stroke="#d9bd4e" stroke-width="1.200"/>
 <text x="646.900" y="254.200" font-size="6.500" font-weight="bold" text-anchor="middle">vtkVistrailsFileReader</text>
 <text x="725.900" y="254.200" font-size="6.500" font-weight="bold" text-anchor="middle">MeshCell</text>
</svg>

<svg class="abs" style="left:784px;top:752px" width="16" height="16" viewBox="0 0 16 16"><path d="M3.400 16 L16 3.400 M7.400 16 L16 7.400 M11.400 16 L16 11.400" stroke="#fff" stroke-width="1.300" fill="none"/><path d="M4.600 16 L16 4.600 M8.600 16 L16 8.600 M12.600 16 L16 12.600" stroke="#68696d" stroke-width="1.200" fill="none"/></svg>
</div>
</body>
</html>
